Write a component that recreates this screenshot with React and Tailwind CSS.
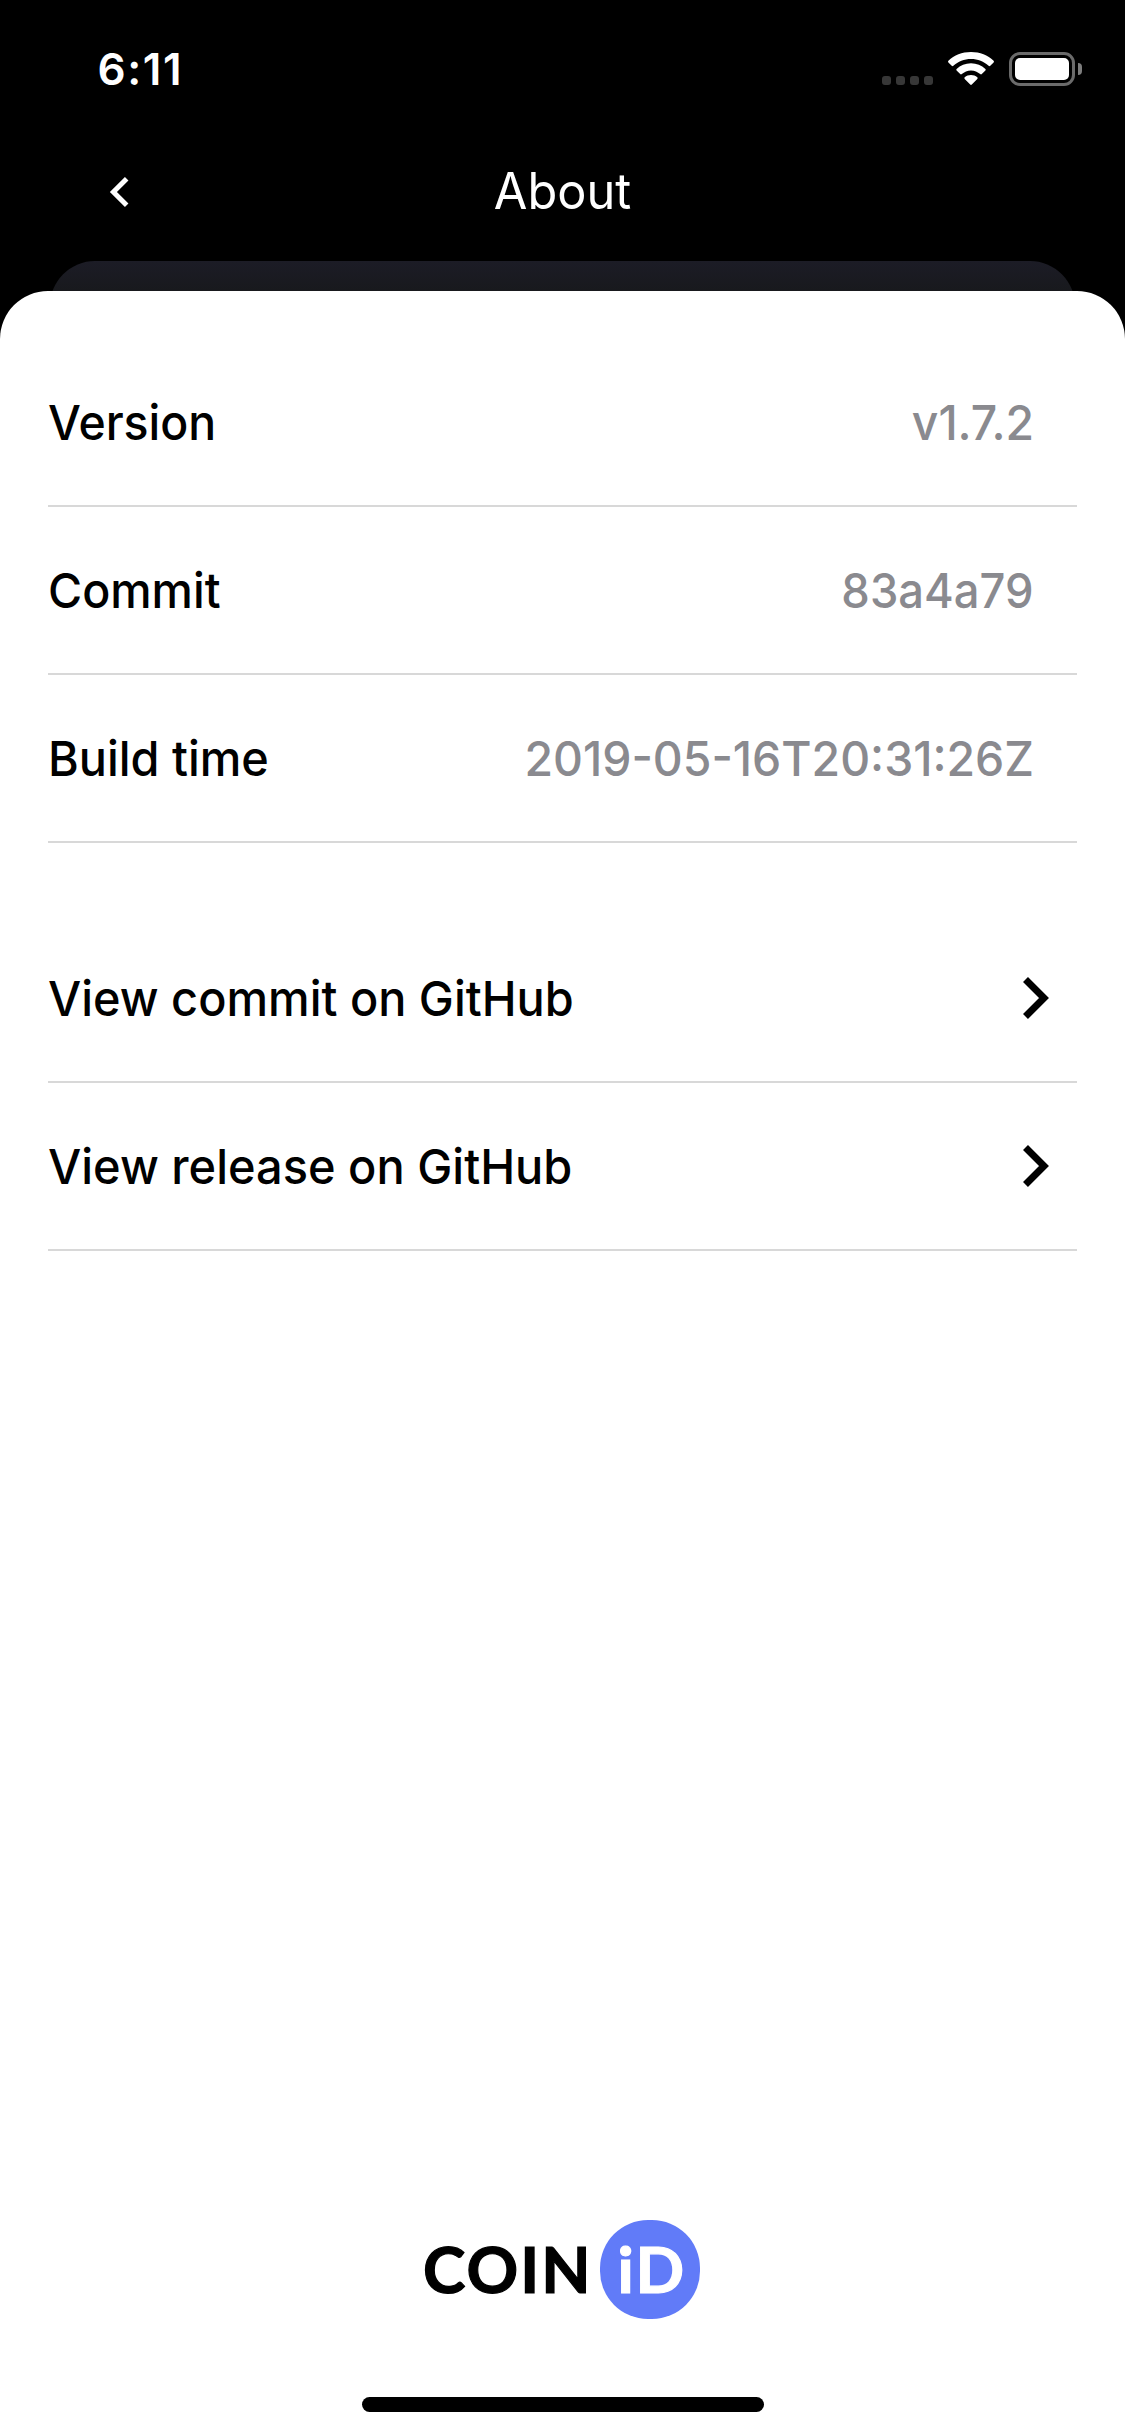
import React from "react";

function StatusBar() {
  return (
    <div className="flex h-[132px] items-start justify-between pl-[97.5px] pr-[43px] text-white">
      <span className="mt-[41px] text-[44px] font-semibold leading-[56px] tracking-[1.6px]">6:11</span>
      <div className="mt-[52px] flex items-end">
        <div className="mb-px flex gap-[5px]">
          <i className="size-[9px] rounded-[3px] bg-[#373737]" />
          <i className="size-[9px] rounded-[3px] bg-[#373737]" />
          <i className="size-[9px] rounded-[3px] bg-[#373737]" />
          <i className="size-[9px] rounded-[3px] bg-[#373737]" />
        </div>
        <svg className="mb-px ml-[15px]" width="46" height="33" viewBox="0 0 46 33" fill="#fff">
          <path d="M23 0C32 0 39.8 3.3 45.6 8.7C46.1 9.2 46.1 9.9 45.6 10.4L42.3 13.8C41.8 14.3 41.1 14.3 40.6 13.8C36 9.6 29.8 7.1 23 7.1C16.2 7.1 10 9.6 5.4 13.8C4.9 14.3 4.2 14.3 3.7 13.8L.4 10.4C-.1 9.9-.1 9.2.4 8.7C6.2 3.3 14 0 23 0Z" />
          <path d="M23 11.2C28.6 11.2 33.6 13.4 37.4 16.9C37.9 17.4 37.9 18 37.4 18.5L33.8 22.1C33.3 22.6 32.7 22.6 32.2 22.1C29.7 19.8 26.6 18.4 23 18.4C19.4 18.4 16.3 19.8 13.8 22.1C13.3 22.6 12.7 22.6 12.2 22.1L8.6 18.5C8.1 18 8.1 17.4 8.6 16.9C12.4 13.4 17.4 11.2 23 11.2Z" />
          <path d="M23 23C25.4 23 27.6 23.9 29.3 25.3C29.8 25.8 29.8 26.4 29.3 26.9L23.8 32.5C23.3 33 22.7 33 22.2 32.5L16.7 26.9C16.2 26.4 16.2 25.8 16.7 25.3C18.4 23.9 20.6 23 23 23Z" />
        </svg>
        <div className="ml-[15px] h-[34px] w-[66px] rounded-[11px] border-[3px] border-[#6b6b6b] p-[3px]">
          <div className="h-full w-full rounded-[5px] bg-white" />
        </div>
        <div className="mb-[11px] ml-[3px] h-[12px] w-[4px] rounded-r-full bg-[#7d7d7d]" />
      </div>
    </div>
  );
}

function Header() {
  return (
    <div className="grid h-[129px] grid-cols-[1fr_auto_1fr] items-start text-white">
      <svg className="ml-[108px] mt-[44px]" width="22" height="32" viewBox="0 0 22 32" fill="none" stroke="#fff" strokeWidth="5">
        <path d="M18.7 2.7L5.4 16L18.7 29.3" />
      </svg>
      <h1 className="mt-[29px] scale-x-[.975] text-[50px] font-normal leading-[60px]">About</h1>
    </div>
  );
}

function Row({ label, labelClass, children }) {
  return (
    <div className="flex h-[168px] items-start justify-between border-b-2 border-[#d8d8d8]">
      <span className={`mt-[54px] origin-left whitespace-nowrap text-[48.5px] font-medium leading-[60px] ${labelClass}`}>
        {label}
      </span>
      {children}
    </div>
  );
}

function Value({ className, children }) {
  return (
    <span className={`mr-[43px] mt-[54px] origin-right whitespace-nowrap text-[48.5px] font-medium leading-[60px] text-[#8a8a8f] ${className}`}>
      {children}
    </span>
  );
}

function Chevron() {
  return (
    <svg className="mr-[26px] mt-[62px]" width="28" height="42" viewBox="0 0 28 42" fill="none" stroke="#000" strokeWidth="7">
      <path d="M2.5 2.5L21 21L2.5 39.5" />
    </svg>
  );
}

export default function App() {
  return (
    <div className="flex h-[2436px] w-[1125px] flex-col overflow-hidden bg-black font-['Inter',sans-serif]">
      <StatusBar />
      <Header />
      <div className="mx-[50px] h-[30px] overflow-hidden">
        <div className="h-[90px] rounded-[45px] bg-linear-to-b from-[#1c1c26] via-[#18191d] via-33% to-[#18191d]" />
      </div>
      <main className="flex flex-1 flex-col rounded-t-[48px] bg-white px-[48px] pt-[48px] text-black">
        <section>
          <Row label="Version" labelClass="scale-x-[.957]">
            <Value className="scale-x-[.955]">v1.7.2</Value>
          </Row>
          <Row label="Commit" labelClass="scale-x-[.96]">
            <Value className="scale-x-[.935]">83a4a79</Value>
          </Row>
          <Row label="Build time" labelClass="scale-x-[.966]">
            <Value className="scale-x-[.956]">2019-05-16T20:31:26Z</Value>
          </Row>
        </section>
        <section className="mt-[72px]">
          <Row label="View commit on GitHub" labelClass="scale-x-[.966]">
            <Chevron />
          </Row>
          <Row label="View release on GitHub" labelClass="scale-x-[.968]">
            <Chevron />
          </Row>
        </section>
        <footer className="mt-auto flex flex-col items-center">
          <div className="mr-[2px] flex h-[99px] w-[277px] items-center justify-between font-['Lato',sans-serif] font-bold">
            <span className="-mt-px text-[64px] leading-[78px] tracking-[2.1px] [-webkit-text-stroke:1.2px_#000]">COIN</span>
            <span className="flex h-[99px] w-[100px] items-start justify-center rounded-[48px] bg-[#617bf8] pl-[4px] pt-[10px] text-[64px] leading-[78px] tracking-[2.2px] text-white [-webkit-text-stroke:1.2px_#fff]">
              iD
            </span>
          </div>
          <div className="mb-[24px] mt-[78px] h-[15px] w-[402px] rounded-full bg-black" />
        </footer>
      </main>
    </div>
  );
}
